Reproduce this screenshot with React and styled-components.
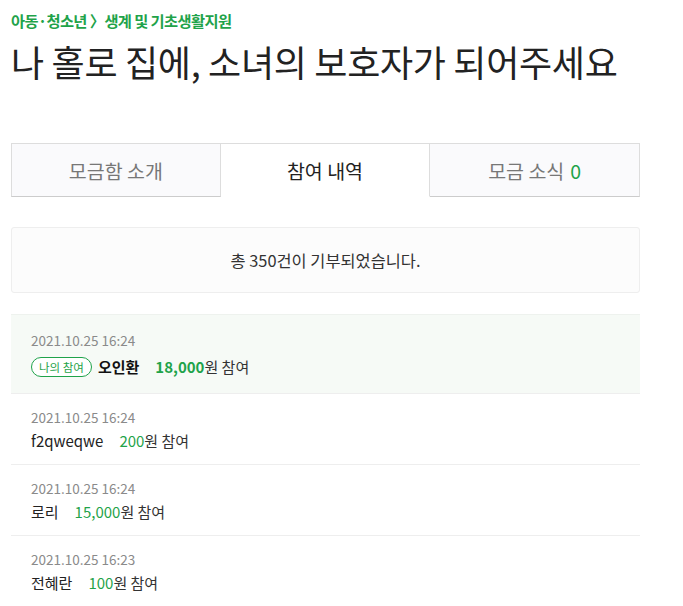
import styled, { createGlobalStyle } from "styled-components";

const GlobalStyle = createGlobalStyle`
  body {
    margin: 0;
    background: #fff;
    font-family: "Noto Sans CJK KR", "Noto Sans", sans-serif;
    color: #222;
  }
`;

const Page = styled.div`
  padding: 9px 43px 0 11px;
`;

const Category = styled.div`
  font-size: 15.3px;
  font-weight: 700;
  color: #1fa34a;
  line-height: 22px;
  letter-spacing: -0.6px;
`;

const Title = styled.h1`
  margin: 8px 0 0;
  font-size: 36px;
  font-weight: 400;
  line-height: 44px;
  color: #222;
  letter-spacing: -0.3px;
`;

const Tabs = styled.div`
  display: grid;
  grid-template-columns: repeat(3, 1fr);
  margin-top: 60px;
  height: 54px;
`;

const Tab = styled.div`
  display: flex;
  align-items: center;
  justify-content: center;
  font-size: 19.5px;
  color: ${(p) => (p.$active ? "#222" : "#777")};
  background: ${(p) => (p.$active ? "#fff" : "#fafafc")};
  border: 1px solid #ddd;
  border-bottom-color: ${(p) => (p.$active ? "transparent" : "#ccc")};
  & + & {
    border-left: none;
  }
`;

const Count = styled.span`
  color: #1fa34a;
  margin-left: 6px;
`;

const Summary = styled.div`
  box-sizing: border-box;
  margin-top: 30px;
  height: 66px;
  display: flex;
  align-items: center;
  justify-content: center;
  background: #fcfcfc;
  border: 1px solid #eee;
  border-radius: 3px;
  font-size: 16.4px;
  color: #333;
`;

const List = styled.ul`
  list-style: none;
  margin: 21px 0 0;
  padding: 0;
`;

const Item = styled.li`
  padding: ${(p) => (p.$mine ? "16px 20px 15px" : "13px 20px 12px")};
  background: ${(p) => (p.$mine ? "#f6faf6" : "#fff")};
  border-top: 1px solid ${(p) => (p.$mine ? "#eef2ee" : "transparent")};
  border-bottom: 1px solid #eee;
`;

const Date = styled.div`
  font-size: 13.5px;
  line-height: 18px;
  color: #8a8a8a;
`;

const Line = styled.div`
  display: flex;
  align-items: center;
  margin-top: ${(p) => (p.$mine ? "7px" : "4px")};
  height: 22px;
  line-height: 22px;
  font-size: 15px;
  color: #333;
`;

const Badge = styled.span`
  display: inline-flex;
  align-items: center;
  height: 18px;
  padding: 0 7px;
  border: 1px solid #1fa34a;
  border-radius: 10px;
  font-size: 11.5px;
  color: #1fa34a;
  background: #fff;
  margin-right: 6px;
`;

const Name = styled.span`
  color: ${(p) => (p.$mine ? "#111" : "#222")};
  font-weight: ${(p) => (p.$mine ? 700 : 400)};
  margin-right: 16px;
`;

const Amount = styled.span`
  color: #1fa34a;
  font-weight: ${(p) => (p.$mine ? 700 : 400)};
`;

const donations = [
  { date: "2021.10.25 16:24", name: "오인환", amount: "18,000", mine: true },
  { date: "2021.10.25 16:24", name: "f2qweqwe", amount: "200" },
  { date: "2021.10.25 16:24", name: "로리", amount: "15,000" },
  { date: "2021.10.25 16:23", name: "전혜란", amount: "100" },
];

export default function App() {
  return (
    <Page>
      <GlobalStyle />
      <Category>아동·청소년 〉생계 및 기초생활지원</Category>
      <Title>나 홀로 집에, 소녀의 보호자가 되어주세요</Title>
      <Tabs>
        <Tab>모금함 소개</Tab>
        <Tab $active>참여 내역</Tab>
        <Tab>
          모금 소식<Count>0</Count>
        </Tab>
      </Tabs>
      <Summary>총 350건이 기부되었습니다.</Summary>
      <List>
        {donations.map((d, i) => (
          <Item key={i} $mine={d.mine}>
            <Date>{d.date}</Date>
            <Line $mine={d.mine}>
              {d.mine && <Badge>나의 참여</Badge>}
              <Name $mine={d.mine}>{d.name}</Name>
              <Amount $mine={d.mine}>{d.amount}</Amount>원 참여
            </Line>
          </Item>
        ))}
      </List>
    </Page>
  );
}
